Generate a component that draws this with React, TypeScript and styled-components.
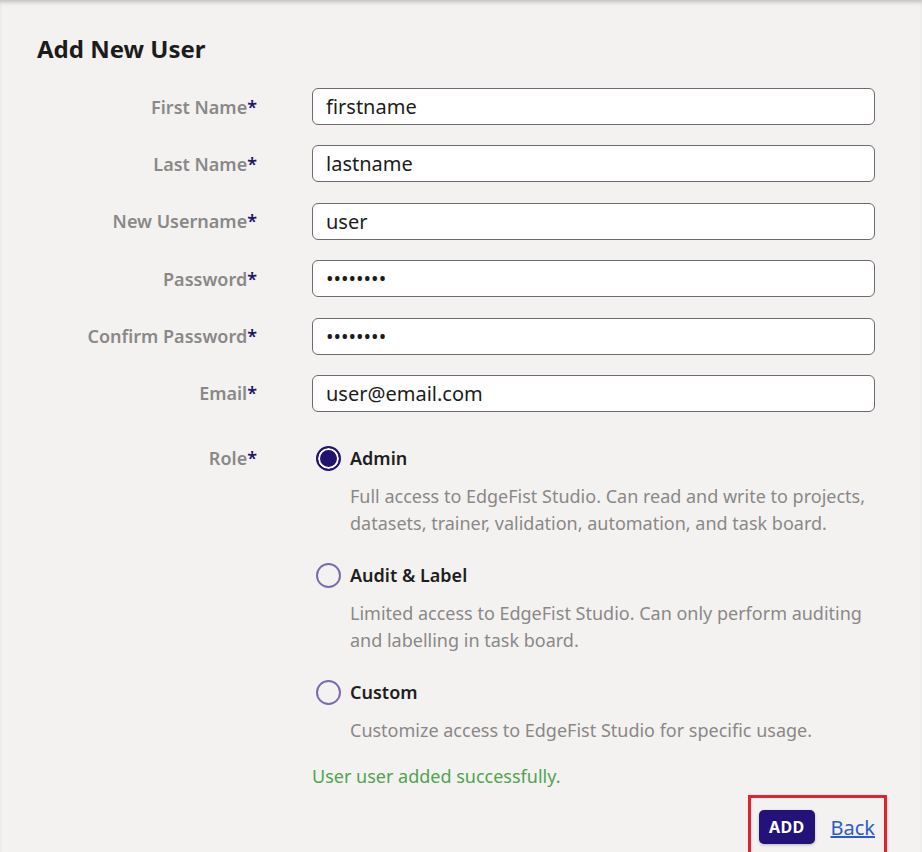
import React from "react";
import styled, { createGlobalStyle } from "styled-components";

const Global = createGlobalStyle`
  html, body { margin: 0; padding: 0; background: #f4f2f0; }
  body { font-family: "Noto Sans", "Open Sans", sans-serif; }
  * { box-sizing: border-box; }
`;

const Page = styled.div`
  min-height: 852px;
  background: #f4f2f0;
  box-shadow: inset 0 4px 4px -2px rgba(0, 0, 0, 0.22);
  padding: 32px 47px 0 37px;
  overflow: hidden;
`;

const Title = styled.h1`
  margin: 0 0 22px 0;
  font-size: 24px;
  line-height: 34px;
  font-weight: 700;
  color: #1c1c1c;
`;

const Form = styled.div`
  display: grid;
  grid-template-columns: 220px 1fr;
  column-gap: 55px;
  row-gap: 20.4px;
  align-items: center;
`;

const Label = styled.label`
  justify-self: end;
  font-size: 18px;
  font-weight: 600;
  color: #8a8888;
  white-space: nowrap;
`;

const Star = styled.span`
  color: #22136e;
`;

const Input = styled.input`
  width: 100%;
  height: 37px;
  border: 1px solid #6b6b70;
  border-radius: 6px;
  background: #fff;
  padding: 0 13px;
  font-family: "Noto Sans", sans-serif;
  font-size: 20px;
  color: #1c1c1c;
  outline: none;
`;

const RoleRow = styled.div`
  grid-column: 1 / -1;
  display: grid;
  grid-template-columns: 220px 1fr;
  column-gap: 55px;
  padding-top: 13px;
`;

const RoleLabelCell = styled.div`
  justify-self: end;
  font-size: 18px;
  line-height: 26px;
  font-weight: 600;
  color: #8a8888;
`;

const RoleList = styled.div`
  display: flex;
  flex-direction: column;
  gap: 25px;
`;

const RoleOption = styled.div`
  display: grid;
  grid-template-columns: 29px 1fr;
  column-gap: 9px;
  row-gap: 12px;
  align-items: center;
`;

const Radio = styled.span<{ $checked?: boolean }>`
  width: 25px;
  height: 25px;
  margin-left: 4px;
  border-radius: 50%;
  border: 2px solid ${(p) => (p.$checked ? "#22136e" : "#7a6ab0")};
  background: ${(p) => (p.$checked ? "#22136e" : "transparent")};
  box-shadow: ${(p) => (p.$checked ? "inset 0 0 0 2px #fff" : "none")};
`;

const RoleName = styled.span`
  font-size: 18px;
  line-height: 26px;
  font-weight: 600;
  color: #1e1e1e;
`;

const RoleDesc = styled.p`
  grid-column: 2;
  margin: 0;
  font-size: 18px;
  line-height: 27px;
  color: #8a8888;
`;

const Success = styled.div`
  margin-top: 19px;
  font-size: 18px;
  line-height: 26px;
  color: #4ca64c;
`;

const Actions = styled.div`
  display: flex;
  justify-content: flex-end;
  margin-top: 6px;
  margin-right: -12px;
`;

const Highlight = styled.div`
  display: flex;
  align-items: center;
  gap: 16px;
  border: 3px solid #e8202a;
  padding: 12px 9px 20px 8px;
`;

const AddButton = styled.button`
  height: 34px;
  padding: 0 10px;
  border: none;
  border-radius: 5px;
  background: #22127a;
  color: #fff;
  font-family: "Noto Sans", sans-serif;
  font-size: 16px;
  font-weight: 700;
  letter-spacing: 0.3px;
  box-shadow: 0 1px 3px rgba(0, 0, 0, 0.25);
`;

const BackLink = styled.a`
  font-size: 20px;
  color: #2a5bd0;
  text-decoration: underline;
  cursor: pointer;
`;

const fields = [
  { label: "First Name", value: "firstname" },
  { label: "Last Name", value: "lastname" },
  { label: "New Username", value: "user" },
  { label: "Password", value: "••••••••" },
  { label: "Confirm Password", value: "••••••••" },
  { label: "Email", value: "user@email.com" },
];

const roles = [
  {
    name: "Admin",
    checked: true,
    desc: "Full access to EdgeFist Studio. Can read and write to projects, datasets, trainer, validation, automation, and task board.",
  },
  {
    name: "Audit & Label",
    desc: "Limited access to EdgeFist Studio. Can only perform auditing and labelling in task board.",
  },
  {
    name: "Custom",
    desc: "Customize access to EdgeFist Studio for specific usage.",
  },
];

export default function App() {
  return (
    <>
      <Global />
      <Page>
        <Title>Add New User</Title>
        <Form>
          {fields.map((f) => (
            <React.Fragment key={f.label}>
              <Label>
                {f.label}
                <Star>*</Star>
              </Label>
              <Input readOnly value={f.value} />
            </React.Fragment>
          ))}
          <RoleRow>
            <RoleLabelCell>
              Role<Star>*</Star>
            </RoleLabelCell>
            <div>
              <RoleList>
                {roles.map((r) => (
                  <RoleOption key={r.name}>
                    <Radio $checked={r.checked} />
                    <RoleName>{r.name}</RoleName>
                    <RoleDesc>{r.desc}</RoleDesc>
                  </RoleOption>
                ))}
              </RoleList>
              <Success>User user added successfully.</Success>
              <Actions>
                <Highlight>
                  <AddButton>ADD</AddButton>
                  <BackLink>Back</BackLink>
                </Highlight>
              </Actions>
            </div>
          </RoleRow>
        </Form>
      </Page>
    </>
  );
}
